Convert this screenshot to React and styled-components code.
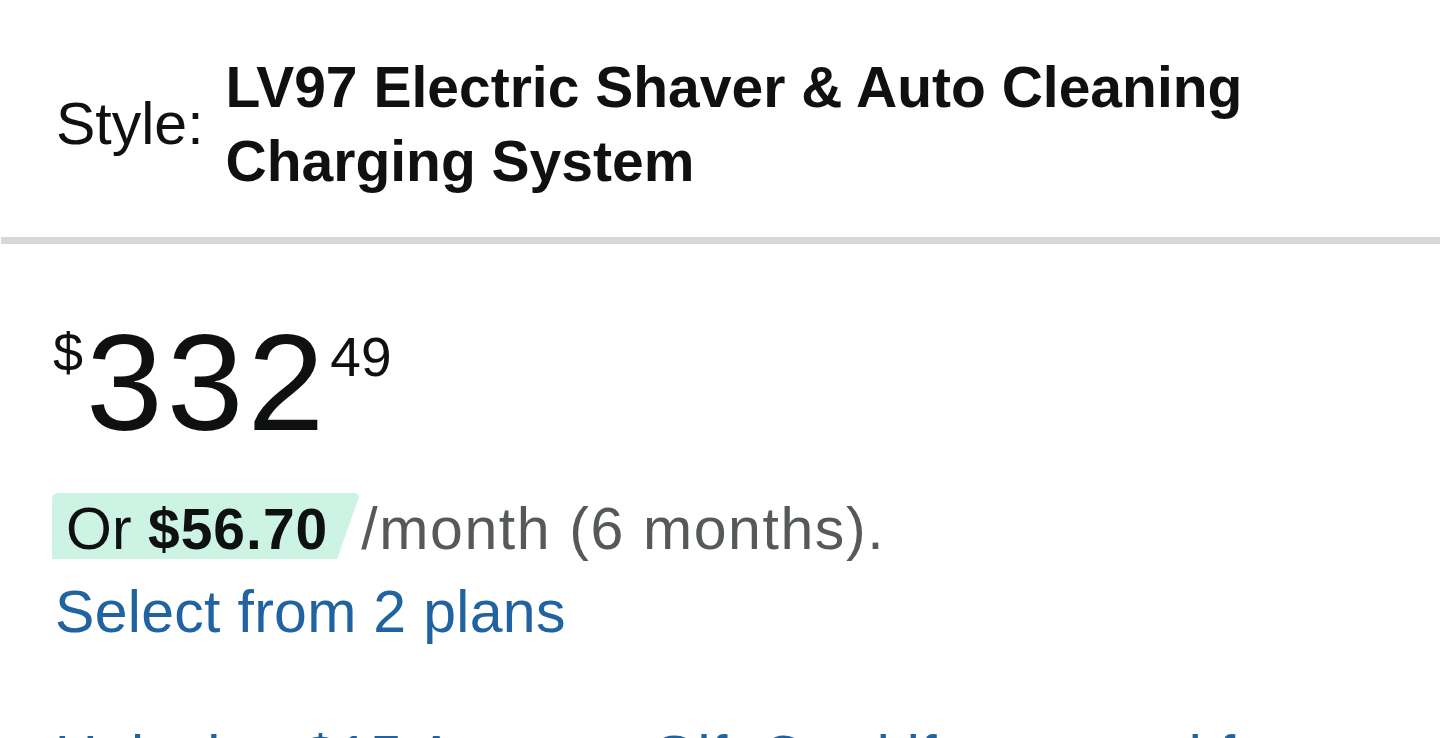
import React from "react";
import styled, { createGlobalStyle } from "styled-components";

const GlobalStyle = createGlobalStyle`
  html, body {
    margin: 0;
    padding: 0;
    background: #ffffff;
  }
  body {
    font-family: "Liberation Sans", Arial, sans-serif;
    color: #0f1111;
    overflow: hidden;
  }
`;

const Page = styled.div`
  width: 1440px;
  height: 738px;
  overflow: hidden;
  background: #ffffff;
`;

const StyleSection = styled.section`
  display: flex;
  align-items: center;
  gap: 22px;
  padding: 50px 55px 0 56px;
`;

const StyleLabel = styled.span`
  font-size: 59px;
  line-height: 74px;
  color: #0f1111;
  white-space: nowrap;
`;

const StyleValue = styled.span`
  font-size: 57px;
  line-height: 74px;
  font-weight: 700;
  color: #0f1111;
  max-width: 1080px;
`;

const Divider = styled.hr`
  margin: 39px 0 0 1px;
  border: 0;
  height: 7px;
  background: #d5d9d9;
`;

const PriceSection = styled.section`
  padding: 69px 55px 0 53px;
`;

const PriceRow = styled.div`
  display: flex;
  align-items: flex-start;
`;

const Sup = styled.span`
  font-size: ${({ $size }) => $size}px;
  line-height: ${({ $size }) => $size}px;
  margin-top: ${({ $offset }) => $offset}px;
  margin-left: ${({ $left }) => $left || 0}px;
  color: #0f1111;
`;

const Whole = styled.span`
  font-size: 138px;
  line-height: 138px;
  letter-spacing: 4px;
  color: #0f1111;
  margin-left: 3px;
`;

const PlanLine = styled.div`
  display: flex;
  align-items: baseline;
  margin-top: 42px;
  margin-left: -1px;
`;

const Highlight = styled.span`
  display: inline-block;
  font-size: 59px;
  line-height: 59px;
  padding: 7px 32px 0 14px;
  background: #cdf3e4;
  border-radius: 6px 6px 0 0;
  clip-path: polygon(0 0, 100% 0, calc(100% - 23px) 100%, 0 100%);
  color: #0f1111;
  white-space: nowrap;
`;

const Bold = styled.b`
  font-size: 57px;
  font-weight: 700;
  letter-spacing: 1px;
`;

const Muted = styled.span`
  font-size: 59px;
  line-height: 59px;
  color: #565959;
  letter-spacing: 1.6px;
  margin-left: 1px;
  white-space: nowrap;
`;

const Link = styled.a`
  display: block;
  font-size: 59px;
  line-height: 59px;
  color: #2162a1;
  text-decoration: none;
  margin-top: ${({ $gap }) => $gap}px;
  margin-left: 2px;
  letter-spacing: 0.3px;
`;

export default function App() {
  return (
    <Page>
      <GlobalStyle />
      <StyleSection>
        <StyleLabel>Style:</StyleLabel>
        <StyleValue>LV97 Electric Shaver &amp; Auto Cleaning Charging System</StyleValue>
      </StyleSection>
      <Divider />
      <PriceSection>
        <PriceRow>
          <Sup $size={54} $offset={12}>$</Sup>
          <Whole>332</Whole>
          <Sup $size={55} $offset={17} $left={2}>49</Sup>
        </PriceRow>
        <PlanLine>
          <Highlight>
            Or <Bold>$56.70</Bold>
          </Highlight>
          <Muted>/month (6 months).</Muted>
        </PlanLine>
        <Link href="#" $gap={24}>Select from 2 plans</Link>
        <Link href="#" $gap={86}>
          Unlock a $15 Amazon Gift Card if approved for Prime Visa.
        </Link>
      </PriceSection>
    </Page>
  );
}
